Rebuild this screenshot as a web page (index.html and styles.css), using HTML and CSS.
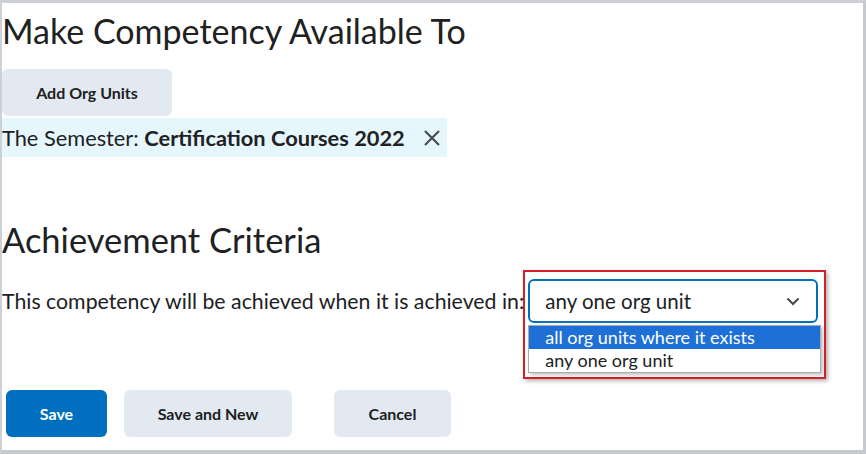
FILE: index.html
```html
<html>
  <head>
    <link rel="stylesheet" href="styles.css">
  </head>
  <body>
    <div class="frame">
      <h1 class="title">Make Competency Available To</h1>
      <button class="btn">Add Org Units</button>
      <div class="chip">
        <span>The Semester: <b>Certification Courses 2022</b></span>
        <svg class="chip-x" width="18" height="18" viewBox="0 0 18 18">
          <path d="M2 2 L16 16 M16 2 L2 16" stroke="#494c50" stroke-width="2.2" fill="none" />
        </svg>
      </div>

      <h2 class="title2">Achievement Criteria</h2>
      <div class="criteria">
        <span>This competency will be achieved when it is achieved in:</span>
        <div class="select-wrap">
          <div class="select">
            <span>any one org unit</span>
            <svg width="14" height="9" viewBox="0 0 14 9">
              <path d="M1.5 1.5 L7 7 L12.5 1.5" stroke="#494c50" stroke-width="2.2" fill="none" />
            </svg>
          </div>
          <ul class="options">
            <li class="active">all org units where it exists</li>
            <li>any one org unit</li>
          </ul>
          <div class="callout"></div>
        </div>
      </div>

      <div class="actions">
        <button class="btn primary save">Save</button>
        <button class="btn save-new">Save and New</button>
        <button class="btn cancel">Cancel</button>
      </div>
    </div>
  </body>
</html>
```

FILE: styles.css
```css
body {
  margin: 0;
  font-family: Lato, "Noto Sans", sans-serif;
  color: #202122;
}

.frame {
  width: 866px;
  height: 454px;
  box-sizing: border-box;
  border-top: 3px solid #cdd1d5;
  border-left: 2px solid #cdd1d5;
  border-right: 3px solid #c6cacf;
  border-bottom: 4px solid #c6cacf;
  background: #fff;
  overflow: hidden;
}

.title {
  font-size: 34px;
  font-weight: 400;
  line-height: 38px;
  margin: 9px 0 19px 0;
}

.btn {
  display: block;
  font-family: Lato, "Noto Sans", sans-serif;
  font-size: 16px;
  font-weight: 700;
  color: #202122;
  background: #e3e9f1;
  border: 0;
  border-radius: 6px;
  height: 47px;
  padding: 0;
}

.frame > .btn {
  width: 170px;
}

.chip {
  display: flex;
  align-items: center;
  width: 445px;
  height: 39px;
  margin-top: 2px;
  background: #e6f6fd;
  font-size: 21.8px;
  box-sizing: border-box;
}

.chip span {
  flex: 1;
  white-space: nowrap;
}

.chip-x {
  margin-right: 6px;
}

.title2 {
  font-size: 34.5px;
  font-weight: 400;
  line-height: 38px;
  margin: 64px 0 0 0;
}

.criteria {
  display: flex;
  align-items: center;
  font-size: 21.3px;
  margin-top: 20px;
  white-space: nowrap;
}

.select-wrap {
  position: relative;
  margin-left: 4px;
}

.select {
  display: flex;
  align-items: center;
  justify-content: space-between;
  width: 290px;
  height: 44px;
  box-sizing: border-box;
  border: 2px solid #006fbf;
  border-radius: 6px;
  padding: 0 16px 0 15px;
  font-size: 20.5px;
  background: #fff;
}

.options {
  position: absolute;
  left: 0;
  top: 46px;
  width: 293px;
  margin: 0;
  padding: 0;
  list-style: none;
  background: #fff;
  border: 1px solid #a7abb0;
  box-sizing: border-box;
  box-shadow: 2px 2px 4px rgba(0, 0, 0, 0.25);
  font-size: 18px;
}

.options li {
  height: 23px;
  line-height: 23px;
  padding-left: 16px;
}

.options li.active {
  background: #1e6fd6;
  color: #fff;
}

.callout {
  position: absolute;
  left: -5px;
  top: -9px;
  width: 303px;
  height: 109px;
  box-sizing: border-box;
  border: 2px solid #d2202b;
  box-shadow: 2px 2px 4px rgba(0, 0, 0, 0.3);
}

.actions {
  display: flex;
  margin-top: 67px;
  padding-left: 4px;
}

.save {
  width: 101px;
}

.primary {
  background: #006fbf;
  color: #fff;
}

.save-new {
  width: 168px;
  margin-left: 17px;
}

.cancel {
  width: 117px;
  margin-left: 42px;
}
```
